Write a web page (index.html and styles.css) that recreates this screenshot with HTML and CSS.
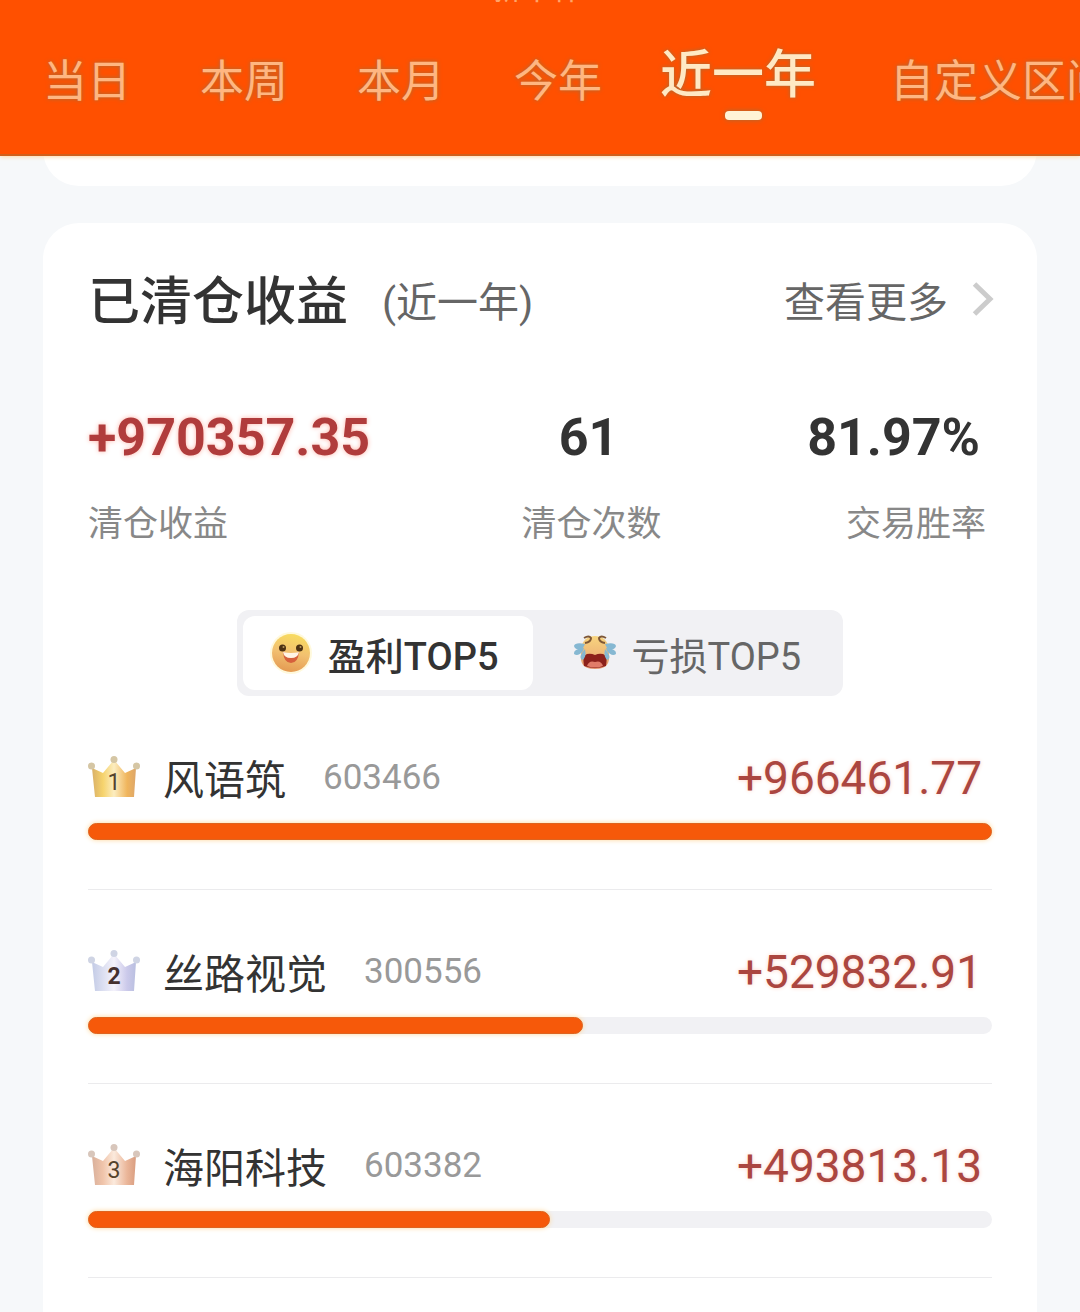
FILE: index.html
```
<!DOCTYPE html>
<html lang="zh-CN">
  <head>
    <meta charset="UTF-8" />
    <meta name="viewport" content="width=device-width, initial-scale=1.0" />
    <title>已清仓收益</title>
    <link rel="stylesheet" href="styles.css" />
  </head>
  <body>
    <header class="header">
      <div class="account">新本作</div>
      <nav class="tabs">
        <button class="tab" type="button">当日</button>
        <button class="tab" type="button">本周</button>
        <button class="tab" type="button">本月</button>
        <button class="tab" type="button">今年</button>
        <button class="tab active" type="button">近一年</button>
        <button class="tab" type="button">自定义区间</button>
      </nav>
    </header>

    <main class="content">
      <div class="prev-card"></div>

      <section class="card">
        <div class="card-head">
          <h1 class="card-title">已清仓收益</h1>
          <span class="card-range">(近一年)</span>
          <a class="more" href="#">
            查看更多
            <svg class="chevron" viewBox="0 0 22 36" aria-hidden="true">
              <path d="M2.500 3 L18 18 L2.500 33" fill="none" stroke="#ccc" stroke-width="5" />
            </svg>
          </a>
        </div>

        <div class="summary">
          <div class="summary-item">
            <strong class="summary-value profit">+970357.35</strong>
            <span class="summary-label">清仓收益</span>
          </div>
          <div class="summary-item center">
            <strong class="summary-value">61</strong>
            <span class="summary-label">清仓次数</span>
          </div>
          <div class="summary-item right">
            <strong class="summary-value">81.97%</strong>
            <span class="summary-label">交易胜率</span>
          </div>
        </div>

        <div class="switch">
          <button class="switch-btn selected" type="button">
            <svg class="emoji" viewBox="0 0 44 44" aria-hidden="true">
              <defs>
                <linearGradient id="face" x1="0.6" y1="0" x2="0.4" y2="1">
                  <stop offset="0" stop-color="#f8dc60" />
                  <stop offset="0.5" stop-color="#f2c070" />
                  <stop offset="1" stop-color="#e49a52" />
                </linearGradient>
              </defs>
              <circle cx="22" cy="22" r="21" fill="#fff5c4" opacity="0.6" />
              <circle cx="22" cy="22" r="19" fill="url(#face)" />
              <circle cx="13.500" cy="17" r="3.500" fill="#4c3113" />
              <circle cx="30.500" cy="17" r="3.500" fill="#4c3113" />
              <circle cx="14.500" cy="16" r="1" fill="#b99758" />
              <circle cx="31.500" cy="16" r="1" fill="#b99758" />
              <path d="M14 21 Q22 24 30 21 Q29 32 22 32 Q15 32 14 21Z" fill="#d6603c" />
              <path d="M14 21 Q22 23 30 21 Q29 27 22 27 Q15 27 14 21Z" fill="#fff4e4" />
            </svg>
            盈利TOP5
          </button>
          <button class="switch-btn" type="button">
            <svg class="emoji" viewBox="0 0 44 44" aria-hidden="true">
              <defs>
                <linearGradient id="cry" x1="0" y1="0" x2="0" y2="1">
                  <stop offset="0" stop-color="#f7d47e" />
                  <stop offset="0.6" stop-color="#efb677" />
                  <stop offset="1" stop-color="#e3926b" />
                </linearGradient>
              </defs>
              <path d="M22 5 C33 5 37 14 36 23 C37 32 34 38 22 38 C10 38 7 32 8 23 C7 14 11 5 22 5Z" fill="url(#cry)" />
              <path d="M11 7 Q16 4 18 7 Q18 11 12 12 M33 7 Q28 4 26 7 Q26 11 32 12" fill="none" stroke="#7e5736" stroke-width="2" />
              <path d="M11 35 Q9 24 14 23 Q18 22 22 24 Q26 22 30 23 Q35 24 33 35 Q22 39 11 35Z" fill="#8c211b" />
              <path d="M14 35 Q16 29 22 31 Q28 29 30 35 Q22 38 14 35Z" fill="#e17c68" />
              <path d="M12 13 Q2 11 1 15 Q2 20 10 17Z M11 17 Q0 18 1 23 Q5 26 10 20Z M12 18 Q5 26 9 29 Q14 27 12 18Z" fill="#86b8d2" />
              <path d="M32 13 Q42 11 43 15 Q42 20 34 17Z M33 17 Q44 18 43 23 Q39 26 34 20Z M32 18 Q39 26 35 29 Q30 27 32 18Z" fill="#86b8d2" />
            </svg>
            亏损TOP5
          </button>
        </div>

        <ul class="rank">
          <li class="rank-item">
            <div class="rank-line">
              <svg class="crown" viewBox="0 0 52 42" aria-hidden="true">
                <defs>
                  <linearGradient id="gold">
                    <stop offset="0" stop-color="#d9b068" />
                    <stop offset="0.25" stop-color="#f6d36c" />
                    <stop offset="0.5" stop-color="#fcedc0" />
                    <stop offset="0.8" stop-color="#f0b55c" />
                    <stop offset="1" stop-color="#dda66a" />
                  </linearGradient>
                </defs>
                <path d="M4 12 L15 17 L25 5 L27 5 L37 17 L48 12 L46 41 L7 41Z" fill="url(#gold)" />
                <g fill="#d5c6a4">
                  <circle cx="3.500" cy="10" r="3.500" />
                  <circle cx="26" cy="3.500" r="3.500" />
                  <circle cx="48.500" cy="10" r="3.500" />
                </g>
                <text class="crown-num" x="26" y="34">1</text>
              </svg>
              <span class="rank-name">风语筑</span>
              <span class="rank-code">603466</span>
              <span class="rank-value">+966461.77</span>
            </div>
            <div class="bar"><div class="bar-fill" style="width: 100%"></div></div>
          </li>
          <li class="rank-item">
            <div class="rank-line">
              <svg class="crown" viewBox="0 0 52 42" aria-hidden="true">
                <defs>
                  <linearGradient id="silver">
                    <stop offset="0" stop-color="#c3cbe6" />
                    <stop offset="0.5" stop-color="#f4f2fb" />
                    <stop offset="0.8" stop-color="#cbc9ea" />
                    <stop offset="1" stop-color="#b9bfe0" />
                  </linearGradient>
                </defs>
                <path d="M4 12 L15 17 L25 5 L27 5 L37 17 L48 12 L46 41 L7 41Z" fill="url(#silver)" />
                <g fill="#cfd4e4">
                  <circle cx="3.500" cy="10" r="3.500" />
                  <circle cx="26" cy="3.500" r="3.500" />
                  <circle cx="48.500" cy="10" r="3.500" />
                </g>
                <text class="crown-num bold" x="26" y="34">2</text>
              </svg>
              <span class="rank-name">丝路视觉</span>
              <span class="rank-code">300556</span>
              <span class="rank-value">+529832.91</span>
            </div>
            <div class="bar"><div class="bar-fill" style="width: 54.8%"></div></div>
          </li>
          <li class="rank-item">
            <div class="rank-line">
              <svg class="crown" viewBox="0 0 52 42" aria-hidden="true">
                <defs>
                  <linearGradient id="bronze">
                    <stop offset="0" stop-color="#d9b09b" />
                    <stop offset="0.25" stop-color="#f0c4aa" />
                    <stop offset="0.5" stop-color="#fbeadd" />
                    <stop offset="0.8" stop-color="#eab598" />
                    <stop offset="1" stop-color="#d99d80" />
                  </linearGradient>
                </defs>
                <path d="M4 12 L15 17 L25 5 L27 5 L37 17 L48 12 L46 41 L7 41Z" fill="url(#bronze)" />
                <g fill="#d8c6bb">
                  <circle cx="3.500" cy="10" r="3.500" />
                  <circle cx="26" cy="3.500" r="3.500" />
                  <circle cx="48.500" cy="10" r="3.500" />
                </g>
                <text class="crown-num" x="26" y="34">3</text>
              </svg>
              <span class="rank-name">海阳科技</span>
              <span class="rank-code">603382</span>
              <span class="rank-value">+493813.13</span>
            </div>
            <div class="bar"><div class="bar-fill" style="width: 51.1%"></div></div>
          </li>
        </ul>
      </section>
    </main>
  </body>
</html>
```

FILE: styles.css
```
* {
  box-sizing: border-box;
  margin: 0;
  padding: 0;
}

body {
  display: flex;
  flex-direction: column;
  min-height: 100vh;
  background: #f6f8fa;
  color: #333;
  font-family: Roboto, "Noto Sans CJK SC", sans-serif;
  overflow-x: hidden;
}

button {
  border: none;
  background: none;
  font-family: inherit;
  white-space: nowrap;
}

/* header */
.header {
  position: relative;
  z-index: 1;
  background: #ff5000;
  border-bottom: 2px solid #d0601c;
  box-shadow: 0 1px 4px #ffd9a8;
}

.account {
  display: flex;
  justify-content: center;
  align-items: flex-end;
  height: 5px;
  padding-right: 6px;
  overflow: hidden;
  color: #ffa468;
  font-size: 31px;
  line-height: 32px;
}

.tabs {
  display: flex;
  align-items: flex-start;
  gap: 69px;
  height: 149px;
  padding: 47px 0 0 43px;
  overflow: hidden;
}

.tab {
  flex-shrink: 0;
  color: #ffb681;
  font-size: 44px;
  line-height: 60px;
  text-shadow: 0 0 4px #a0703c;
}

.tab.active {
  position: relative;
  margin: -6px 5px 0 -11px;
  color: #ffe9c4;
  font-size: 52px;
  font-weight: 500;
}

.tab.active::after {
  content: "";
  position: absolute;
  left: 50%;
  bottom: -14px;
  width: 37px;
  height: 9px;
  margin-left: -13px;
  border-radius: 4px;
  background: #fff3d6;
  box-shadow: 0 0 5px #a0703c;
}

/* cards */
.content {
  display: flex;
  flex: 1;
  flex-direction: column;
  gap: 37px;
  padding: 0 43px;
}

.prev-card {
  height: 60px;
  margin-top: -30px;
  background: #fff;
  border-radius: 0 0 36px 36px;
}

.card {
  flex: 1;
  padding: 50px 45px 0;
  background: #fff;
  border-radius: 36px 36px 0 0;
}

.card-head {
  display: flex;
  align-items: center;
  line-height: 60px;
}

.card-title {
  font-size: 52px;
  font-weight: 500;
}

.card-range {
  margin-left: 34px;
  color: #666;
  font-size: 41px;
}

.more {
  display: flex;
  align-items: center;
  gap: 24px;
  margin-right: -2px;
  margin-left: auto;
  color: #666;
  font-size: 41px;
  text-decoration: none;
}

.chevron {
  width: 22px;
  height: 36px;
  margin-bottom: 8px;
}

.summary {
  display: flex;
  justify-content: space-between;
  margin-top: 75px;
  padding-right: 6px;
}

.summary-item {
  display: flex;
  flex-direction: column;
  gap: 35px;
}

.summary-item.center {
  align-items: center;
}

.summary-item.right {
  align-items: flex-end;
}

.summary-value {
  padding-right: 6px;
  font-size: 52px;
  font-weight: 700;
  line-height: 60px;
}

.profit {
  color: #b03c3c;
  text-shadow: 0 0 5px #ffb4a8;
}

.summary-label {
  color: #888;
  font-size: 35px;
  line-height: 44px;
}

/* profit / loss switch */
.switch {
  display: flex;
  width: fit-content;
  margin: 63px auto 0;
  padding: 6px;
  background: #f1f1f4;
  border-radius: 12px;
}

.switch-btn {
  display: flex;
  align-items: center;
  gap: 15px;
  height: 74px;
  padding: 0 36px 0 40px;
  color: #666;
  font-size: 38px;
  border-radius: 12px;
}

.switch-btn.selected {
  padding: 0 34px 0 26px;
  background: #fff;
  color: #333;
  font-weight: 500;
}

.emoji {
  width: 44px;
  height: 44px;
}

/* ranking */
.rank {
  list-style: none;
}

.rank-item {
  padding: 56px 0 49px;
  border-bottom: 1px solid #ebebed;
}

.rank-line {
  display: flex;
  align-items: center;
  height: 52px;
  margin-bottom: 19px;
  line-height: 52px;
}

.crown {
  width: 52px;
  height: 42px;
  margin-right: 23px;
  margin-bottom: 2px;
}

.crown-num {
  fill: #55432c;
  font-size: 23px;
  text-anchor: middle;
}

.crown-num.bold {
  fill: #45302f;
  font-weight: 700;
}

.rank-name {
  padding-top: 6px;
  font-size: 41px;
}

.rank-code {
  margin-left: 37px;
  color: #999;
  font-size: 35px;
}

.rank-value {
  margin-left: auto;
  padding-right: 10px;
  color: #ab4640;
  font-size: 46px;
  text-shadow: 0 0 4px #ffd2c6;
}

.bar {
  height: 17px;
  background: #f1f1f4;
  border-radius: 9px;
}

.bar-fill {
  height: 17px;
  background: #f6590a;
  border: 1px solid #dd6420;
  border-radius: 9px;
  box-shadow: 0 0 5px #ffd596;
}
```
